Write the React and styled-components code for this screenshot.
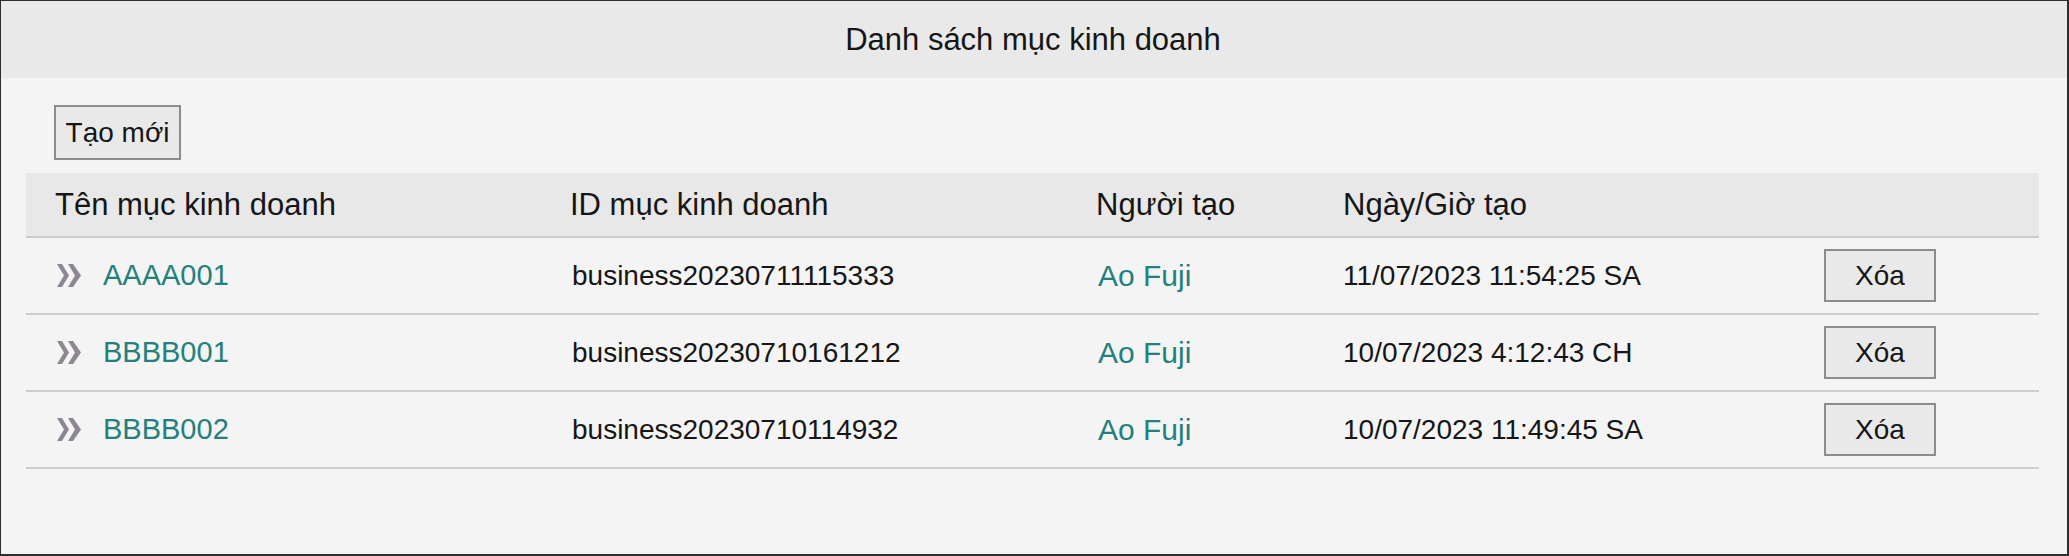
import React from 'react';
import styled, { createGlobalStyle } from 'styled-components';

const GlobalStyle = createGlobalStyle`
  html, body {
    margin: 0;
    padding: 0;
    background: #f4f4f4;
  }
  * {
    box-sizing: border-box;
  }
`;

const Panel = styled.div`
  width: 2069px;
  height: 556px;
  background: #f4f4f4;
  border-style: solid;
  border-color: #2e2e2e;
  border-width: 1px 2px 2px 1px;
  font-family: "Liberation Sans", Arial, sans-serif;
  color: #161616;
  display: flex;
  flex-direction: column;
`;

const TitleBar = styled.div`
  height: 77px;
  background: #e9e9e9;
  display: flex;
  align-items: center;
  justify-content: center;
  font-size: 31px;
  padding-right: 2px;
`;

const Body = styled.div`
  padding: 26px 28px 0 25px;
  display: flex;
  flex-direction: column;
  align-items: flex-start;
`;

const GrayButton = styled.button`
  width: ${({ w }) => w}px;
  height: ${({ h }) => h}px;
  background: #e9e9e9;
  border: 2px solid #8c8c8c;
  border-radius: 0;
  font-family: inherit;
  font-size: 28px;
  color: #161616;
  padding: 0;
  display: flex;
  align-items: center;
  justify-content: center;
`;

const CreateWrap = styled.div`
  margin: 1px 0 13px 28px;
`;

const Table = styled.div`
  width: 2013px;
`;

const columns = '515px 526px 247px 481px 1fr';

const HeadRow = styled.div`
  display: grid;
  grid-template-columns: ${columns};
  align-items: center;
  height: 65px;
  background: #e8e8e8;
  border-bottom: 2px solid #cbcbcb;
  font-size: 31px;
  padding-top: 1px;
`;

const Row = styled.div`
  display: grid;
  grid-template-columns: ${columns};
  align-items: center;
  height: 77px;
  border-bottom: 2px solid #cdcdcd;
  font-size: 28px;
`;

const Cell = styled.div`
  padding-left: ${({ pad }) => pad ?? 29}px;
  display: flex;
  align-items: center;
  white-space: nowrap;
`;

const NameLink = styled.a`
  color: #23807b;
  text-decoration: none;
  margin-left: 21px;
  font-size: 29px;
`;

const UserLink = styled.a`
  color: #23807b;
  text-decoration: none;
  font-size: 30px;
`;

const Chevron = () => (
  <svg width="25" height="23" viewBox="0 0 25 23">
    <polygon points="0,0 5,0 12,11.5 5,23 0,23 7,11.5" fill="#8d8794" />
    <polygon points="11,0 16,0 24,11.5 16,23 11,23 18,11.5" fill="#8d8794" />
  </svg>
);

const rows = [
  { name: 'AAAA001', id: 'business20230711115333', user: 'Ao Fuji', date: '11/07/2023 11:54:25 SA' },
  { name: 'BBBB001', id: 'business20230710161212', user: 'Ao Fuji', date: '10/07/2023 4:12:43 CH' },
  { name: 'BBBB002', id: 'business20230710114932', user: 'Ao Fuji', date: '10/07/2023 11:49:45 SA' },
];

const App = () => {
  return (
    <>
      <GlobalStyle />
      <Panel>
        <TitleBar>Danh sách mục kinh doanh</TitleBar>
        <Body>
          <CreateWrap>
            <GrayButton w={127} h={55}>Tạo mới</GrayButton>
          </CreateWrap>
          <Table>
            <HeadRow>
              <Cell>Tên mục kinh doanh</Cell>
              <Cell>ID mục kinh doanh</Cell>
              <Cell>Người tạo</Cell>
              <Cell>Ngày/Giờ tạo</Cell>
              <Cell />
            </HeadRow>
            {rows.map(r => (
              <Row key={r.id}>
                <Cell pad={31}>
                  <Chevron />
                  <NameLink href="#">{r.name}</NameLink>
                </Cell>
                <Cell pad={31}>{r.id}</Cell>
                <Cell pad={31}>
                  <UserLink href="#">{r.user}</UserLink>
                </Cell>
                <Cell pad={29}>{r.date}</Cell>
                <Cell>
                  <GrayButton w={112} h={53}>Xóa</GrayButton>
                </Cell>
              </Row>
            ))}
          </Table>
        </Body>
      </Panel>
    </>
  );
};

export default App;
